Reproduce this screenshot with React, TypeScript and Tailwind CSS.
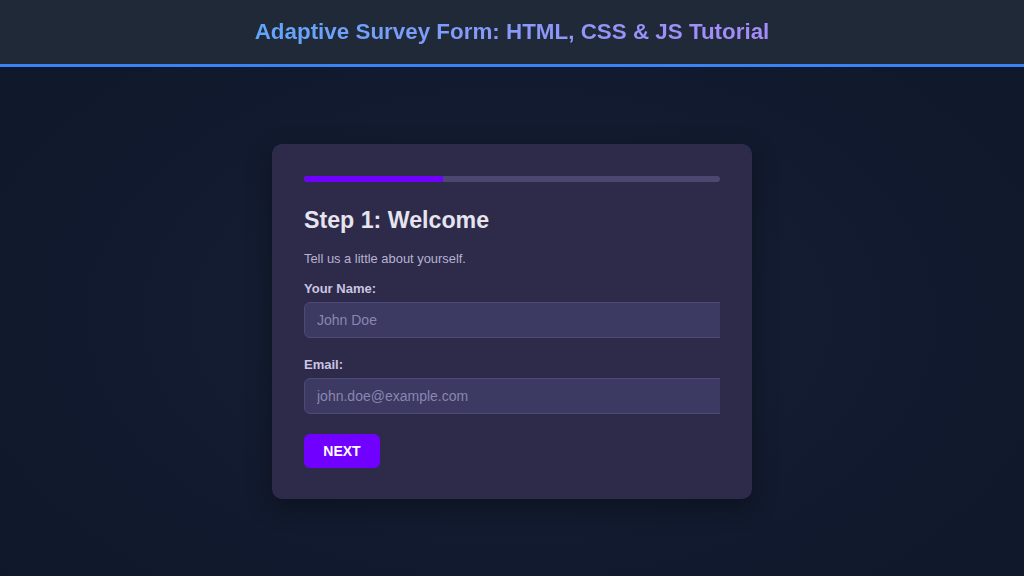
import React from 'react'

function Field({ label, placeholder, type }: { label: string; placeholder: string; type: string }) {
    return (
        <div className="flex flex-col">
            <label className="text-[13px] font-bold text-[#c9c5e2] leading-[16px] mb-[5px]">{label}</label>
            <div className="overflow-hidden">
                <input
                    type={type}
                    placeholder={placeholder}
                    className="w-[calc(100%+24px)] h-[36px] rounded-[6px] border border-[#4d4a7a] bg-[#3c3962] px-3 text-[14px] text-[#e5e3f5] placeholder:text-[#8a86b3] outline-none"
                />
            </div>
        </div>
    )
}

export default function App() {
    return (
        <div className="min-h-[576px] w-full flex flex-col bg-[#111827] font-['Liberation_Sans',Arial,sans-serif]"
            style={{ backgroundImage: 'radial-gradient(ellipse at 50% 55%, #172036 0%, #111a2e 55%, #0f172a 100%)' }}>
            <header className="h-[67px] bg-[#1f2937] border-b-[3px] border-[#3b82f6] flex items-center justify-center">
                <h1 className="text-[22.4px] font-bold bg-gradient-to-r from-[#60a5fa] to-[#a78bfa] bg-clip-text text-transparent pb-[1px]">
                    Adaptive Survey Form: HTML, CSS &amp; JS Tutorial
                </h1>
            </header>

            <main className="flex justify-center pt-[77px]">
                <div className="w-[480px] h-[355px] rounded-[10px] bg-[#2e2b4a] p-8 shadow-[0_8px_24px_rgba(0,0,0,0.35)]">
                    <div className="h-[6px] rounded-full bg-[#4a4870] overflow-hidden">
                        <div className="h-full w-1/3 bg-[#7000ff] rounded-l-full"></div>
                    </div>

                    <h2 className="mt-[23px] text-[23.2px] font-bold text-[#e6e4ee] leading-[30px]">Step 1: Welcome</h2>
                    <p className="mt-[16px] text-[12.9px] text-[#b7b2d3] leading-[16px]">Tell us a little about yourself.</p>

                    <div className="mt-[14px] flex flex-col gap-[19px]">
                        <Field label="Your Name:" placeholder="John Doe" type="text" />
                        <Field label="Email:" placeholder="john.doe@example.com" type="email" />
                    </div>

                    <button className="mt-[20px] h-[34px] w-[76px] rounded-[6px] bg-[#7000ff] text-white text-[14px] font-bold">
                        NEXT
                    </button>
                </div>
            </main>
        </div>
    )
}
